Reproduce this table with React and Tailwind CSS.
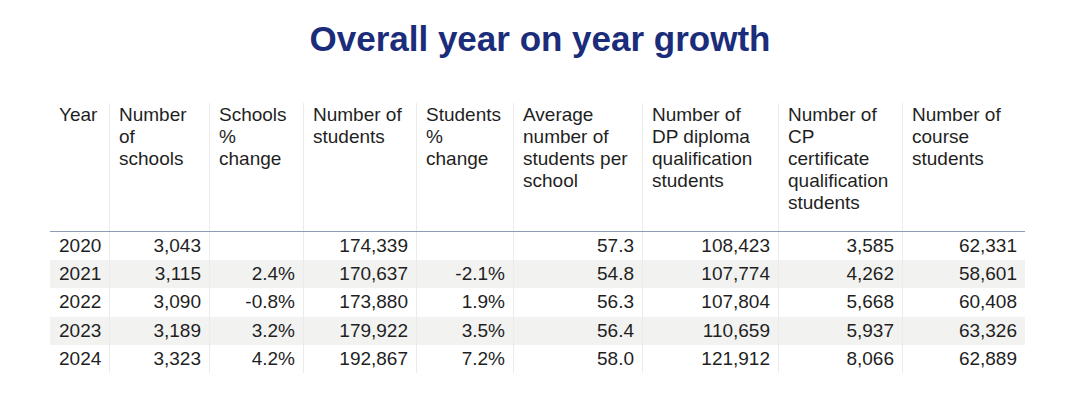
const columns = [
  { label: 'Year', w: 'w-[60px]' },
  { label: 'Number of schools', w: 'w-[100px]', lines: ['Number', 'of', 'schools'] },
  { label: 'Schools % change', w: 'w-[94px]', lines: ['Schools', '%', 'change'] },
  { label: 'Number of students', w: 'w-[113px]', lines: ['Number of', 'students'] },
  { label: 'Students % change', w: 'w-[97px]', lines: ['Students', '%', 'change'] },
  { label: 'Average', w: 'w-[129px]', lines: ['Average', 'number of', 'students per', 'school'] },
  { label: 'DP', w: 'w-[136px]', lines: ['Number of', 'DP diploma', 'qualification', 'students'] },
  { label: 'CP', w: 'w-[124px]', lines: ['Number of', 'CP', 'certificate', 'qualification', 'students'] },
  { label: 'Course', w: 'w-[122px]', lines: ['Number of', 'course', 'students'] },
];

const rows = [
  ['2020', '3,043', '', '174,339', '', '57.3', '108,423', '3,585', '62,331'],
  ['2021', '3,115', '2.4%', '170,637', '-2.1%', '54.8', '107,774', '4,262', '58,601'],
  ['2022', '3,090', '-0.8%', '173,880', '1.9%', '56.3', '107,804', '5,668', '60,408'],
  ['2023', '3,189', '3.2%', '179,922', '3.5%', '56.4', '110,659', '5,937', '63,326'],
  ['2024', '3,323', '4.2%', '192,867', '7.2%', '58.0', '121,912', '8,066', '62,889'],
];

export default function App() {
  return (
    <div className="w-[1080px] h-[413px] bg-white font-['Liberation_Sans',Arial,sans-serif] text-[#1f1f1f]">
      <h1 className="pt-[19px] text-center text-[35px] leading-[40px] font-bold text-[#1b2d7a]">
        Overall year on year growth
      </h1>

      <div className="ml-[50px] mt-[44px] w-[975px] text-[19px] leading-[22px]">
        {/* Header */}
        <div className="flex h-[129px] border-b-[1.5px] border-[#8c9cb3]">
          {columns.map((c, i) => (
            <div
              key={c.label}
              className={`${c.w} pl-[9px] pt-[1px] ${i < columns.length - 1 ? 'border-r border-[#ebebeb]' : ''}`}
            >
              {(c.lines || [c.label]).map((l) => (
                <div key={l} className="whitespace-nowrap">{l}</div>
              ))}
            </div>
          ))}
        </div>

        {/* Body */}
        {rows.map((r, ri) => (
          <div key={r[0]} className={`flex h-[28.2px] ${ri % 2 === 1 ? 'bg-[#f2f2f1]' : ''}`}>
            {r.map((v, i) => (
              <div
                key={i}
                className={`${columns[i].w} flex items-center ${i === 0 ? 'pl-[9px]' : 'justify-end pr-[8px]'} ${i < columns.length - 1 ? 'border-r border-[#ebebeb]' : ''}`}
              >
                {v}
              </div>
            ))}
          </div>
        ))}
      </div>
    </div>
  );
}
